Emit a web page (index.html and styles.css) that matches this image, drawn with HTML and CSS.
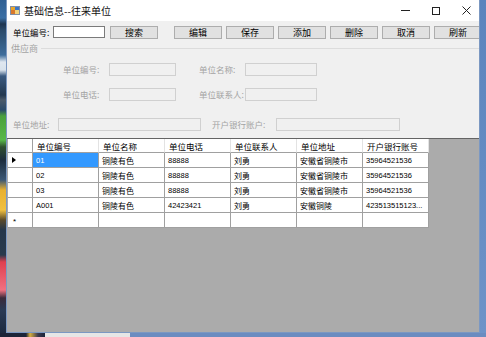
FILE: index.html
```html
<!doctype html>
<html lang="zh">
<head>
  <meta charset="utf-8">
  <title>基础信息--往来单位</title>
  <link rel="stylesheet" href="styles.css">
</head>
<body>
  <div class="screen">
    <div class="desk-left"></div>

    <div class="window">
      <div class="titlebar">
        <svg class="app-icon" width="10" height="9" viewBox="0 0 10 9">
          <rect x="0.5" y="0.5" width="9" height="8" fill="#fff" stroke="#7f8fa8"/>
          <rect x="1" y="1" width="4" height="3" fill="#e9a62c"/>
          <rect x="5" y="1" width="4" height="3" fill="#3c76c4"/>
          <rect x="1" y="4" width="4" height="4" fill="#d9782a"/>
          <rect x="5" y="4" width="4" height="4" fill="#f3d27a"/>
        </svg>
        <span class="title">基础信息--往来单位</span>
        <div class="controls">
          <svg class="ctl-min" width="9" height="9" viewBox="0 0 9 9"><path d="M0 4.5H9" stroke="#222" stroke-width="1"/></svg>
          <svg class="ctl-max" width="8" height="8" viewBox="0 0 8 8"><rect x="0.5" y="0.5" width="7" height="7" fill="none" stroke="#222"/></svg>
          <svg class="ctl-close" width="9" height="9" viewBox="0 0 9 9"><path d="M0.5 0.5L8.5 8.5M8.5 0.5L0.5 8.5" stroke="#222" stroke-width="1"/></svg>
        </div>
      </div>

      <div class="client">
        <div class="toolbar">
          <span class="tb-label">单位编号:</span>
          <input class="tb-input" type="text">
          <button class="btn">搜索</button>
          <button class="btn btn-edit">编辑</button>
          <button class="btn">保存</button>
          <button class="btn">添加</button>
          <button class="btn">删除</button>
          <button class="btn">取消</button>
          <button class="btn">刷新</button>
        </div>

        <div class="group">
          <div class="group-title"><span>供应商</span></div>

          <div class="field-row row-a">
            <span class="f-label">单位编号:</span>
            <input class="f-box box-s" type="text" disabled>
            <span class="f-label f-right">单位名称:</span>
            <input class="f-box box-m" type="text" disabled>
          </div>

          <div class="field-row row-b">
            <span class="f-label">单位电话:</span>
            <input class="f-box box-s" type="text" disabled>
            <span class="f-label f-right">单位联系人:</span>
            <input class="f-box box-m" type="text" disabled>
          </div>
        </div>

        <div class="field-row row-addr">
          <span class="f-label addr-label">单位地址:</span>
          <input class="f-box box-addr" type="text" disabled>
          <span class="f-label bank-label">开户银行账户:</span>
          <input class="f-box box-bank" type="text" disabled>
        </div>

        <div class="grid-area">
          <div class="grid">
            <div class="hd rh"></div>
            <div class="hd">单位编号</div>
            <div class="hd">单位名称</div>
            <div class="hd">单位电话</div>
            <div class="hd">单位联系人</div>
            <div class="hd">单位地址</div>
            <div class="hd">开户银行账号</div>

            <div class="rh"><span class="cur"></span></div>
            <div class="cell sel">01</div>
            <div class="cell">铜陵有色</div>
            <div class="cell num">88888</div>
            <div class="cell">刘勇</div>
            <div class="cell">安徽省铜陵市</div>
            <div class="cell num">35964521536</div>

            <div class="rh"></div>
            <div class="cell num">02</div>
            <div class="cell">铜陵有色</div>
            <div class="cell num">88888</div>
            <div class="cell">刘勇</div>
            <div class="cell">安徽省铜陵市</div>
            <div class="cell num">35964521536</div>

            <div class="rh"></div>
            <div class="cell num">03</div>
            <div class="cell">铜陵有色</div>
            <div class="cell num">88888</div>
            <div class="cell">刘勇</div>
            <div class="cell">安徽省铜陵市</div>
            <div class="cell num">35964521536</div>

            <div class="rh"></div>
            <div class="cell num">A001</div>
            <div class="cell">铜陵有色</div>
            <div class="cell num">42423421</div>
            <div class="cell">刘勇</div>
            <div class="cell">安徽铜陵</div>
            <div class="cell num">423513515123...</div>

            <div class="rh"><span class="star">*</span></div>
            <div class="cell"></div>
            <div class="cell"></div>
            <div class="cell"></div>
            <div class="cell"></div>
            <div class="cell"></div>
            <div class="cell"></div>
          </div>
        </div>
      </div>
    </div>

    <div class="desk-right"></div>
  </div>
  <div class="desk-bottom">
    <span class="bot-dark"></span>
    <span class="bot-light"></span>
    <span class="bot-blue"></span>
  </div>
</body>
</html>
```

FILE: styles.css
```css
html, body {
  margin: 0;
  padding: 0;
}

body {
  width: 486px;
  height: 337px;
  overflow: hidden;
  background: #6b8cc0;
  font-family: "Noto Sans CJK SC", "Liberation Sans", sans-serif;
  color: #000;
}

.screen {
  display: flex;
  height: 333px;
}

.desk-left {
  width: 6px;
  background: linear-gradient(to bottom,
    #2f5f93 0, #3a6fa5 18px, #1e3550 24px, #2a4a6a 30px, #3d6d9c 55px,
    #dfe7f0 62px, #d8e2ec 70px, #3a5a80 76px, #23384f 95px, #4b5a6a 100px,
    #2a4a6a 110px, #4aa03c 116px, #58b848 140px, #2f4f2f 147px, #1d2d3d 160px,
    #3b5775 180px, #e8b030 190px, #f0c040 210px, #5a4a2a 220px, #24364a 230px,
    #2a3a4c 255px, #e04050 262px, #f07080 290px, #3a2a3a 298px, #2a3a55 310px,
    #1c2a40 333px);
}

.window {
  width: 474px;
  box-sizing: border-box;
  border: 1px solid #7b98c2;
  border-top: none;
  display: flex;
  flex-direction: column;
  background: #f0f0f0;
}

.desk-right {
  flex: 1;
  background: linear-gradient(to bottom, #5b84bd, #6e93c8);
}

/* title bar */

.titlebar {
  height: 21px;
  background: #fff;
  display: flex;
  align-items: center;
}

.app-icon {
  margin-left: 3px;
  margin-top: -1px;
}

.title {
  margin-left: 4px;
  font-size: 10px;
  line-height: 12px;
  color: #111;
}

.controls {
  margin-left: auto;
  display: flex;
  align-items: center;
  margin-right: 8px;
}

.ctl-max {
  margin-left: 22px;
}

.ctl-close {
  margin-left: 22px;
}

/* client area */

.client {
  flex: 1;
  display: flex;
  flex-direction: column;
  overflow: hidden;
}

.toolbar {
  display: flex;
  align-items: flex-start;
  padding: 5px 0 0 6px;
  height: 14px;
  white-space: nowrap;
}

.toolbar > * {
  flex: none;
}

.tb-label {
  width: 40px;
  font-size: 8.5px;
  line-height: 12px;
}

.tb-input {
  width: 52px;
  height: 12px;
  box-sizing: border-box;
  border: 1px solid #7a7a7a;
  background: #fff;
  padding: 0;
  margin: 0;
}

.btn {
  width: 48px;
  height: 13px;
  margin: 0 0 0 4px;
  padding: 0;
  box-sizing: border-box;
  border: 1px solid #adadad;
  background: #e1e1e1;
  font-family: inherit;
  font-size: 9px;
  line-height: 11px;
  color: #000;
}

.toolbar .tb-input + .btn {
  margin-left: 5px;
}

.btn-edit {
  margin-left: 16px !important;
}

/* group box */

.group {
  margin-top: 4px;
}

.group-title {
  display: flex;
  align-items: center;
  padding-left: 4px;
  height: 9px;
  font-size: 9px;
  line-height: 9px;
  color: #a3a3a3;
}

.group-title::after {
  content: "";
  flex: 1;
  height: 1px;
  margin-left: 3px;
  background: #dcdcdc;
}

.field-row {
  display: flex;
  align-items: center;
  height: 13px;
}

.field-row > * {
  flex: none;
}

.row-a {
  margin-top: 10px;
  padding-left: 56px;
}

.row-b {
  margin-top: 12px;
  padding-left: 56px;
}

.row-addr {
  margin-top: 17px;
  padding-left: 6px;
}

.f-label {
  font-size: 8.5px;
  line-height: 11px;
  color: #a3a3a3;
  white-space: nowrap;
}

.row-a .f-label,
.row-b .f-label {
  width: 46px;
}

.f-right {
  margin-left: 23px;
}

.f-box {
  height: 13px;
  box-sizing: border-box;
  border: 1px solid #d0d0d0;
  background: #f0f0f0;
  margin: 0;
  padding: 0;
}

.box-s {
  width: 67px;
}

.box-m {
  width: 72px;
}

.addr-label {
  width: 45px;
}

.box-addr {
  width: 143px;
}

.bank-label {
  margin-left: 11px;
  width: 64px;
}

.box-bank {
  width: 124px;
}

/* data grid */

.grid-area {
  flex: 1;
  margin-top: 7px;
  border-top: 1px solid #646464;
  background: #ababab;
  padding-left: 1px;
}

.grid {
  display: grid;
  grid-template-columns: 25px repeat(6, 66px);
  grid-template-rows: 14px repeat(5, 15px);
  font-size: 8px;
}

.grid > div {
  box-sizing: border-box;
  background: #fff;
  overflow: hidden;
  white-space: nowrap;
  display: flex;
  align-items: center;
}

.hd {
  padding-left: 4px;
  font-size: 8.5px;
  border-right: 1px solid #e3e3e3;
  border-bottom: 1px solid #a0a0a0;
}

.rh {
  border-right: 1px solid #a0a0a0;
  border-bottom: 1px solid #a0a0a0;
}

.hd.rh {
  padding-left: 0;
}

.cell {
  padding-left: 3px;
  border-right: 1px solid #a0a0a0;
  border-bottom: 1px solid #a0a0a0;
}

.num {
  font-family: "Liberation Sans", sans-serif;
  font-size: 7.5px;
}

.sel {
  background: #3399ff !important;
  color: #fff;
  font-family: "Liberation Sans", sans-serif;
  font-size: 7.5px;
}

.cur {
  width: 0;
  height: 0;
  margin-left: 4px;
  border-top: 3px solid transparent;
  border-bottom: 3px solid transparent;
  border-left: 4px solid #000;
}

.star {
  margin-left: 5px;
  font-family: "Liberation Sans", sans-serif;
  font-size: 8px;
  line-height: 8px;
  margin-top: 4px;
}

/* bottom desktop strip */

.desk-bottom {
  display: flex;
  height: 4px;
}

.bot-dark {
  width: 45px;
  background: linear-gradient(to right, #1c2438 0, #1c2438 26px, #d8b040 30px, #3a3a50 38px, #1c2438 45px);
}

.bot-light {
  width: 85px;
  background: #e6e6e6;
}

.bot-blue {
  flex: 1;
  background: #6b8cc0;
}
```
